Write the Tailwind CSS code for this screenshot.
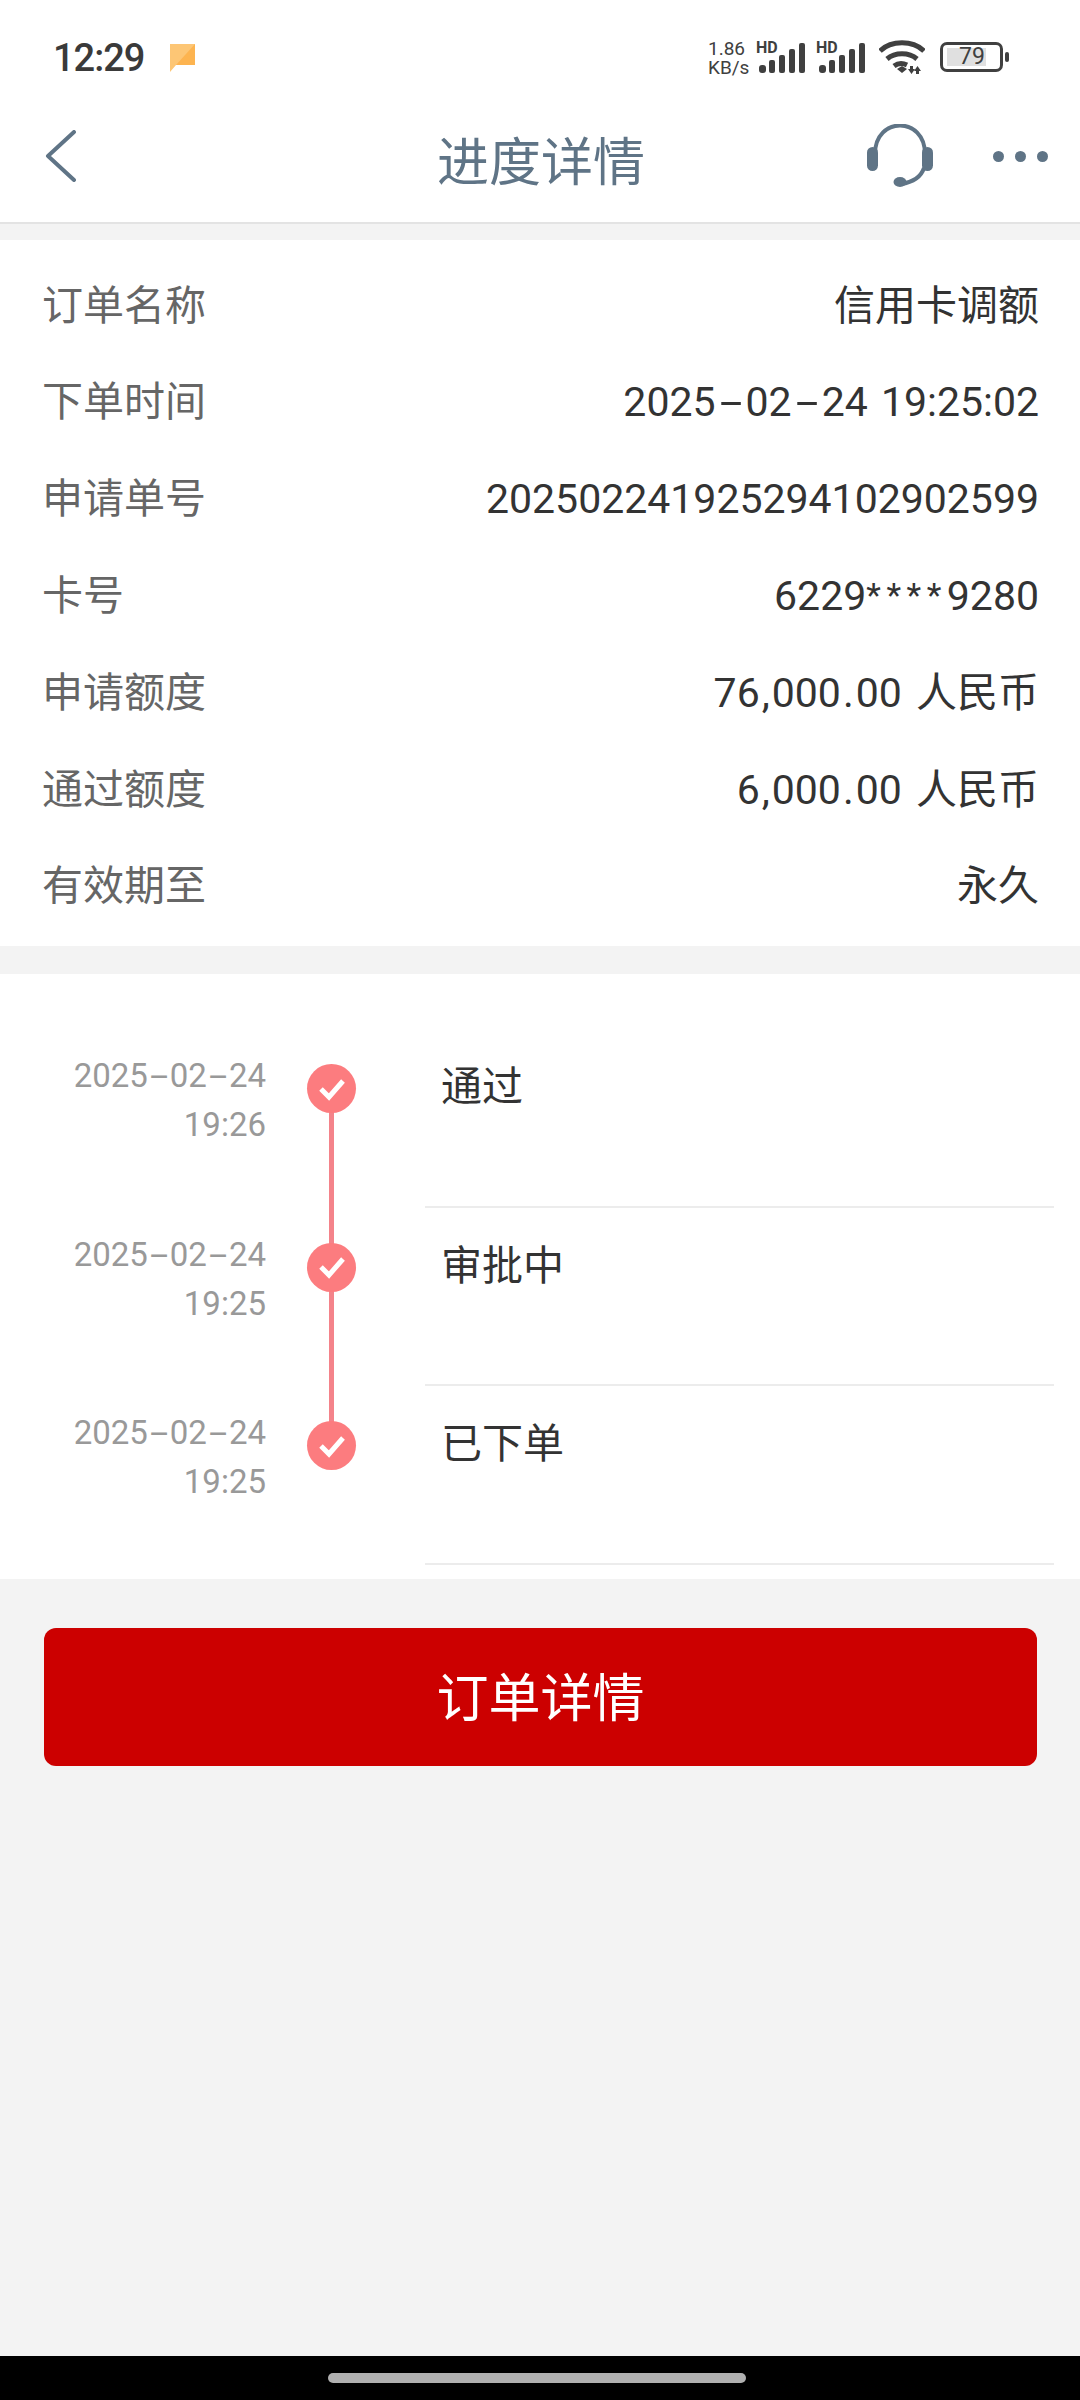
<!DOCTYPE html>
<html lang="zh-CN">
<head>
  <meta charset="UTF-8">
  <meta name="viewport" content="width=device-width, initial-scale=1.0">
  <title>进度详情</title>
  <script src="https://cdn.jsdelivr.net/npm/@tailwindcss/browser@4"></script>
</head>
<body class="bg-[#f3f3f3] font-['Roboto','Noto_Sans_CJK_SC',sans-serif]">
<div class="w-[1080px] h-[2400px] flex flex-col overflow-hidden">

  <!-- status bar -->
  <div class="h-[96px] bg-white flex justify-between items-start pt-[36px] pl-[53px] pr-[71px] shrink-0">
    <div class="flex items-center gap-[26px]">
      <span class="text-[38px] leading-[44px] font-medium tracking-[-1px] text-[#3a3a3a]">12:29</span>
      <svg width="25" height="28" viewBox="0 0 25 28"><path d="M0 0h25v21H6l-6 7z" fill="#fdc675"/><path d="M25 0v21H6z" fill="#fdb450"/></svg>
    </div>
    <div class="flex items-start text-[#404040]">
      <div class="flex flex-col items-start text-[19px] leading-[19px] mt-[3px] w-[48px]"><span>1.86</span><span>KB/s</span></div>
      <svg width="50" height="38" viewBox="0 0 50 38" fill="#404040"><text x="0" y="17" font-size="16" font-weight="700" font-family="Roboto">HD</text><rect x="3" y="29" width="7" height="8" rx="3"/><rect x="13" y="24" width="6" height="13" rx="2"/><rect x="23" y="19" width="6" height="18" rx="2"/><rect x="33" y="13" width="6" height="24" rx="2"/><rect x="43" y="7" width="6" height="30" rx="2"/></svg>
      <svg class="ml-[10px]" width="50" height="38" viewBox="0 0 50 38" fill="#404040"><text x="0" y="17" font-size="16" font-weight="700" font-family="Roboto">HD</text><rect x="3" y="29" width="7" height="8" rx="3"/><rect x="13" y="24" width="6" height="13" rx="2"/><rect x="23" y="19" width="6" height="18" rx="2"/><rect x="33" y="13" width="6" height="24" rx="2"/><rect x="43" y="7" width="6" height="30" rx="2"/></svg>
      <svg class="ml-[13px] mt-[4px]" width="46" height="34" viewBox="0 0 46 34"><g fill="none" stroke="#404040" stroke-width="5"><path d="M1 11C12 0 34 0 45 11"/><path d="M8 19c8-7 22-7 30 0"/><path d="M15 26c4-3 9-3 13-1"/></g><path d="M18 29l5-3 5 3-5 4z" fill="#404040"/><path d="M31 26h3v3h2l-3.500 5-3.500-5h2zM40 34h-3v-3h-2l3.500-5 3.500 5h-2z" fill="#404040"/></svg>
      <div class="ml-[15px] w-[63px] h-[30px] mt-[6px] border-[3px] border-[#404040] rounded-[7px] pl-[4px] pt-[3px] shrink-0"><div class="w-[39px] h-[18px] bg-[#e0e0e0] text-[23px] leading-[18px] text-[#404040] pl-[12px]">79</div></div>
      <div class="w-[4px] h-[10px] bg-[#404040] rounded-[2px] ml-[2px] mt-[16px]"></div>
    </div>
  </div>

  <!-- nav bar -->
  <div class="h-[128px] bg-white border-b-2 border-[#e3e3e3] flex items-center justify-between relative shrink-0 pl-[45px] pr-[32px]">
    <svg class="mb-[6px]" width="32" height="52" viewBox="0 0 32 52" fill="none" stroke="#5f7486" stroke-width="4" stroke-linecap="round" stroke-linejoin="round"><path d="M29 2L3 26l26 24"/></svg>
    <div class="absolute left-[2px] right-0 top-[36px] text-center text-[52px] leading-[64px] text-[#5f7486]">进度详情</div>
    <div class="flex items-center gap-[60px] mb-[6px]">
      <svg width="66" height="64" viewBox="0 0 66 64" fill="none"><path d="M8 30C8 -8 58 -8 58 30" stroke="#5f7486" stroke-width="4"/><path d="M57 44C54 53 47 58 34 60" stroke="#5f7486" stroke-width="4"/><rect x="0" y="23" width="11" height="24" rx="5.5" fill="#5f7486"/><rect x="55" y="23" width="11" height="24" rx="5.5" fill="#5f7486"/><ellipse cx="33" cy="58" rx="6.5" ry="5" fill="#5f7486"/></svg>
      <div class="flex gap-[11px]"><div class="w-[11px] h-[11px] rounded-full bg-[#5f7486]"></div><div class="w-[11px] h-[11px] rounded-full bg-[#5f7486]"></div><div class="w-[11px] h-[11px] rounded-full bg-[#5f7486]"></div></div>
    </div>
  </div>

  <!-- order info -->
  <div class="mt-[16px] bg-white h-[706px] pl-[42px] pr-[41px] pt-[18px] text-[41px] shrink-0 flex flex-col">
    <div class="h-[96.8px] shrink-0 flex justify-between items-center"><span class="text-[#666]">订单名称</span><span class="text-[#333]">信用卡调额</span></div>
    <div class="h-[96.8px] shrink-0 flex justify-between items-center"><span class="text-[#666]">下单时间</span><span class="text-[#333] [word-spacing:3px]">2025<span class="inline-block w-[30px] text-center scale-x-[2]">-</span>02<span class="inline-block w-[30px] text-center scale-x-[2]">-</span>24 19:25:02</span></div>
    <div class="h-[96.8px] shrink-0 flex justify-between items-center"><span class="text-[#666]">申请单号</span><span class="text-[#333]">202502241925294102902599</span></div>
    <div class="h-[96.8px] shrink-0 flex justify-between items-center"><span class="text-[#666]">卡号</span><span class="text-[#333]">6229<span class="text-[34px] tracking-[5.5px] align-[3px]">****</span>9280</span></div>
    <div class="h-[96.8px] shrink-0 flex justify-between items-center"><span class="text-[#666]">申请额度</span><span class="text-[#333]">76<span class="mx-[2px]">,</span>000<span class="mx-[2px]">.</span>00 <span class="ml-[4px]">人民币</span></span></div>
    <div class="h-[96.8px] shrink-0 flex justify-between items-center"><span class="text-[#666]">通过额度</span><span class="text-[#333]">6<span class="mx-[2px]">,</span>000<span class="mx-[2px]">.</span>00 <span class="ml-[4px]">人民币</span></span></div>
    <div class="h-[96.8px] shrink-0 flex justify-between items-center"><span class="text-[#666]">有效期至</span><span class="text-[#333]">永久</span></div>
  </div>

  <!-- timeline -->
  <div class="mt-[28px] bg-white h-[605px] pt-[55px] shrink-0">
    <div class="h-[178.5px] flex">
      <div class="w-[266px] pt-[22px] text-right text-[33px] leading-[49px] text-[#999]">2025<span class="inline-block w-[22px] text-center scale-x-[2]">-</span>02<span class="inline-block w-[22px] text-center scale-x-[2]">-</span>24<br>19:26</div>
      <div class="w-[159px] relative shrink-0">
        <div class="absolute left-[63px] top-[60px] w-[5px] h-[178px] bg-[#f4838a]"></div>
        <div class="absolute left-[41px] top-[35px] w-[49px] h-[49px] rounded-full bg-[#fc7c7f] flex items-center justify-center"><svg width="26" height="24" viewBox="0 0 26 24" fill="none" stroke="#fff" stroke-width="5"><path d="M2 12l8 8L24 4"/></svg></div>
      </div>
      <div class="w-[629px] pl-[16px] pt-[33px] border-b-2 border-[#ececec] text-[41px] leading-[50px] text-[#333]">通过</div>
    </div>
    <div class="h-[178.5px] flex">
      <div class="w-[266px] pt-[22px] text-right text-[33px] leading-[49px] text-[#999]">2025<span class="inline-block w-[22px] text-center scale-x-[2]">-</span>02<span class="inline-block w-[22px] text-center scale-x-[2]">-</span>24<br>19:25</div>
      <div class="w-[159px] relative shrink-0">
        <div class="absolute left-[63px] top-[60px] w-[5px] h-[178px] bg-[#f4838a]"></div>
        <div class="absolute left-[41px] top-[35px] w-[49px] h-[49px] rounded-full bg-[#fc7c7f] flex items-center justify-center"><svg width="26" height="24" viewBox="0 0 26 24" fill="none" stroke="#fff" stroke-width="5"><path d="M2 12l8 8L24 4"/></svg></div>
      </div>
      <div class="w-[629px] pl-[16px] pt-[33px] border-b-2 border-[#ececec] text-[41px] leading-[50px] text-[#333]">审批中</div>
    </div>
    <div class="h-[178.5px] flex">
      <div class="w-[266px] pt-[22px] text-right text-[33px] leading-[49px] text-[#999]">2025<span class="inline-block w-[22px] text-center scale-x-[2]">-</span>02<span class="inline-block w-[22px] text-center scale-x-[2]">-</span>24<br>19:25</div>
      <div class="w-[159px] relative shrink-0">
        <div class="absolute left-[41px] top-[35px] w-[49px] h-[49px] rounded-full bg-[#fc7c7f] flex items-center justify-center"><svg width="26" height="24" viewBox="0 0 26 24" fill="none" stroke="#fff" stroke-width="5"><path d="M2 12l8 8L24 4"/></svg></div>
      </div>
      <div class="w-[629px] pl-[16px] pt-[33px] border-b-2 border-[#ececec] text-[41px] leading-[50px] text-[#333]">已下单</div>
    </div>
  </div>

  <!-- button -->
  <div class="mt-[49px] ml-[44px] mr-[43px] h-[138px] pt-[6px] bg-[#cc0000] rounded-[12px] flex items-center justify-center text-white text-[52px] shrink-0">订单详情</div>

  <div class="flex-1"></div>

  <!-- gesture bar -->
  <div class="h-[44px] bg-black flex justify-center pt-[17px] pr-[6px] shrink-0"><div class="w-[418px] h-[10px] rounded-full bg-[#b0b0b0]"></div></div>
</div>
</body>
</html>
